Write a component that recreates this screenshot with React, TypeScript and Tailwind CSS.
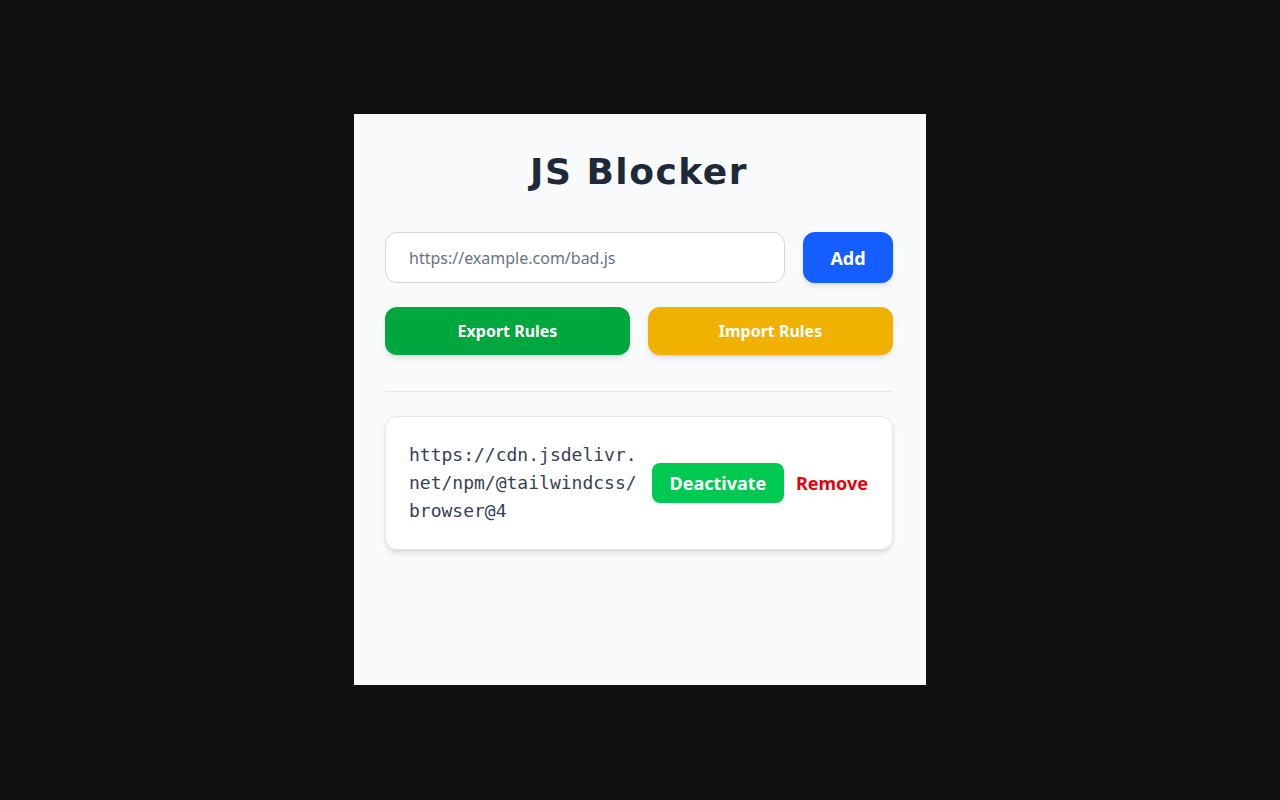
import { useState } from 'react';

interface Rule {
  url: string;
  active: boolean;
}

const App = () => {
  const [input, setInput] = useState('');
  const [rules, setRules] = useState<Rule[]>([
    { url: 'https://cdn.jsdelivr.net/npm/@tailwindcss/browser@4', active: true }
  ]);

  const addRule = () => {
    if (!input.trim()) return;
    setRules([...rules, { url: input.trim(), active: true }]);
    setInput('');
  };

  const toggleRule = (i: number) => {
    setRules(rules.map((r, idx) => (idx === i ? { ...r, active: !r.active } : r)));
  };

  const removeRule = (i: number) => {
    setRules(rules.filter((_, idx) => idx !== i));
  };

  return (
    <div className="min-h-screen w-full bg-[#111111] flex justify-center pt-[114px] font-['Noto_Sans',sans-serif]">
      <div className="w-[572px] h-[571px] bg-gray-50 pl-[31px] pr-[33px] pt-[38px]">
        <h1 className="text-4xl font-bold text-gray-800 text-center mb-10 font-['DejaVu_Sans',sans-serif] tracking-[1.5px]">
          JS Blocker
        </h1>

        <div className="flex gap-[18px] mb-6">
          <input
            value={input}
            onChange={(e) => setInput(e.target.value)}
            placeholder="https://example.com/bad.js"
            className="flex-1 h-[51px] pl-[23px] pr-6 rounded-xl border border-gray-300 bg-white text-base text-gray-800 placeholder:text-gray-500 outline-none"
          />
          <button
            onClick={addRule}
            className="w-[90px] h-[51px] rounded-xl bg-blue-600 text-white text-lg font-bold shadow-md"
          >
            Add
          </button>
        </div>

        <div className="grid grid-cols-2 gap-[18px]">
          <button className="h-12 rounded-xl bg-green-600 text-white text-base font-bold shadow-md">
            Export Rules
          </button>
          <button className="h-12 rounded-xl bg-yellow-500 text-white text-base font-bold shadow-md">
            Import Rules
          </button>
        </div>

        <div className="mt-9 mb-6 border-t border-gray-200" />

        <div className="space-y-4">
          {rules.map((rule, i) => (
            <div
              key={i}
              className="flex items-center gap-3 bg-white border border-gray-200 rounded-xl shadow-md py-6 pl-[23px] pr-6"
            >
              <span className="w-[231px] break-all font-['DejaVu_Sans_Mono',monospace] text-[18px] leading-7 text-gray-700">
                {rule.url}
              </span>
              <button
                onClick={() => toggleRule(i)}
                className={
                  rule.active
                    ? 'h-10 w-[132px] rounded-lg bg-green-500 text-white text-lg font-bold'
                    : 'h-10 w-[132px] rounded-lg bg-gray-400 text-white text-lg font-bold'
                }
              >
                {rule.active ? 'Deactivate' : 'Activate'}
              </button>
              <button
                onClick={() => removeRule(i)}
                className="text-red-600 text-lg font-bold"
              >
                Remove
              </button>
            </div>
          ))}
        </div>
      </div>
    </div>
  );
};

export default App;
